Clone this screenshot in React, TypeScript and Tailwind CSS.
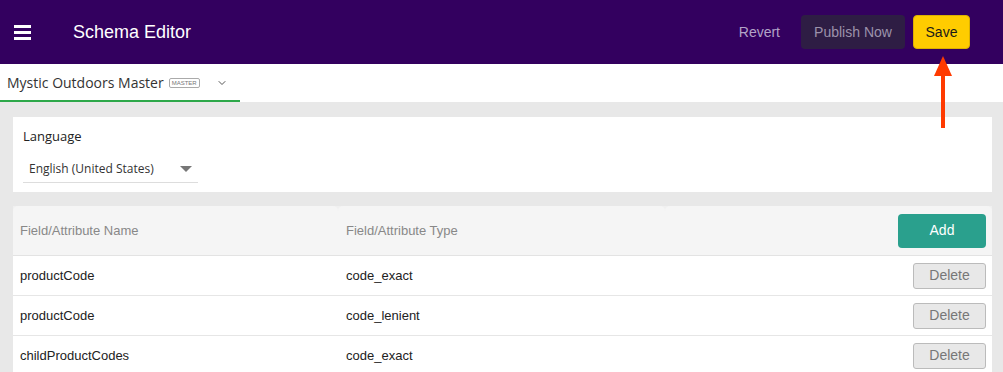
import { ChevronDown } from 'lucide-react';

const rows = [
  { name: 'productCode', type: 'code_exact' },
  { name: 'productCode', type: 'code_lenient' },
  { name: 'childProductCodes', type: 'code_exact' },
];

export default function App() {
  return (
    <div className="relative h-[372px] w-[1003px] overflow-hidden bg-[#e8e8e8] font-['Liberation_Sans',Arial,sans-serif]">
      {/* top bar */}
      <header className="flex h-16 items-center bg-[#33005f] pl-[14px] pr-[33px]">
        <div className="flex w-[17px] flex-col gap-[3px]">
          <span className="h-[3px] bg-white" />
          <span className="h-[3px] bg-white" />
          <span className="h-[3px] bg-white" />
        </div>
        <h1 className="ml-[42px] text-[18px] text-white">Schema Editor</h1>
        <div className="ml-auto flex items-center">
          <span className="mr-[21px] text-[14px] text-[#b2a3c7]">Revert</span>
          <button className="mr-2 h-[34px] w-[104px] rounded-[4px] bg-[#2e1d44] text-[14px] text-[#9c92ab]">
            Publish Now
          </button>
          <button className="h-[34px] w-[57px] rounded-[4px] border border-[#dcb000] bg-[#ffcc00] text-[14px] text-[#1a1a1a]">
            Save
          </button>
        </div>
      </header>

      {/* catalog tab */}
      <div className="flex h-[38px] bg-white">
        <div className="flex w-[240px] items-center border-b-2 border-[#2ea84a] pl-[7px] pt-[1px]">
          <span className="font-['Open_Sans',sans-serif] text-[14px] text-[#333]">Mystic Outdoors Master</span>
          <span className="ml-[5px] rounded-[2px] border border-[#aaa] px-[2px] text-[6px] leading-[8px] text-[#777]">MASTER</span>
          <ChevronDown className="ml-[16px] h-3 w-3 text-[#555]" strokeWidth={2} />
        </div>
      </div>

      {/* language */}
      <section className="ml-[13px] mr-[11px] mt-[15px] h-[75px] bg-white px-[10px] pt-[10px]">
        <div className="font-['Open_Sans',sans-serif] text-[13px] text-[#222]">Language</div>
        <div className="mt-[13px] flex w-[175px] items-center justify-between border-b border-[#ddd] pb-[4px] pl-[6px] pr-[6px]">
          <span className="font-['Open_Sans',sans-serif] text-[12px] text-[#333]">English (United States)</span>
          <span className="h-0 w-0 border-x-[6px] border-t-[6px] border-x-transparent border-t-[#777]" />
        </div>
      </section>

      {/* schema table */}
      <section className="ml-[13px] mr-[11px] mt-[14px] bg-white">
        <div className="flex h-[50px] border-b border-[#e3e3e3] bg-[#f0f0f0]">
          <div className="flex w-[325px] items-center rounded-t-[5px] bg-[#f5f5f5] pl-[7px] text-[13px] text-[#888]">
            Field/Attribute Name
          </div>
          <div className="flex w-[327px] items-center rounded-t-[5px] bg-[#f5f5f5] pl-[8px] text-[13px] text-[#888]">
            Field/Attribute Type
          </div>
          <div className="flex flex-1 items-center justify-end rounded-t-[5px] bg-[#f5f5f5] pr-[6px]">
            <button className="h-[34px] w-[88px] rounded-[4px] bg-[#2aa08d] text-[14px] text-white">Add</button>
          </div>
        </div>
        {rows.map((row, i) => (
          <div key={i} className="flex h-10 items-center border-b border-[#e6e6e6] text-[13px] text-[#222]">
            <div className="w-[325px] pl-[7px]">{row.name}</div>
            <div className="w-[327px] pl-[8px]">{row.type}</div>
            <div className="flex flex-1 justify-end pr-[6px]">
              <button className="h-[26px] w-[73px] rounded-[3px] border border-[#bbb] bg-[#e8e8e8] text-[14px] text-[#777]">
                Delete
              </button>
            </div>
          </div>
        ))}
      </section>

      {/* annotation arrow */}
      <svg className="absolute left-[933px] top-[56px]" width="20" height="72" viewBox="0 0 20 72">
        <polygon points="10,0 19,20 1,20" fill="#ff3a00" />
        <rect x="8" y="18" width="4" height="54" fill="#ff3a00" />
      </svg>
    </div>
  );
}
